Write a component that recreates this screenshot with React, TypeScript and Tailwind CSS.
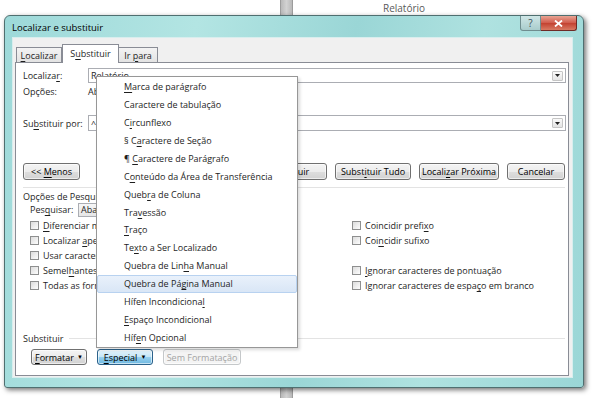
import type { ReactNode } from "react";

const FONT = "font-['Open_Sans',sans-serif]";

function Acc({ t, i = -1 }: { t: string; i?: number }) {
	if (i < 0) return <span className="whitespace-pre">{t}</span>;
	return (
		<span className="whitespace-pre">
			{t.slice(0, i)}
			<span className="underline underline-offset-[1.5px] decoration-[0.5px]">{t[i]}</span>
			{t.slice(i + 1)}
		</span>
	);
}

const MENU_ITEMS: { t: string; i: number }[] = [
	{ t: "Marca de parágrafo", i: 0 },
	{ t: "Caractere de tabulação", i: -1 },
	{ t: "Circunflexo", i: 1 },
	{ t: "§ Caractere de Seção", i: 3 },
	{ t: "¶ Caractere de Parágrafo", i: 2 },
	{ t: "Conteúdo da Área de Transferência", i: 1 },
	{ t: "Quebra de Coluna", i: 4 },
	{ t: "Travessão", i: 3 },
	{ t: "Traço", i: 0 },
	{ t: "Texto a Ser Localizado", i: 2 },
	{ t: "Quebra de Linha Manual", i: 13 },
	{ t: "Quebra de Página Manual", i: 12 },
	{ t: "Hífen Incondicional", i: 18 },
	{ t: "Espaço Incondicional", i: 0 },
	{ t: "Hífen Opcional", i: 3 },
];

const LEFT_CHECKS: { t: string; i: number }[] = [
	{ t: "Diferenciar maiúsculas e minúsculas", i: 0 },
	{ t: "Localizar apenas palavras inteiras", i: 10 },
	{ t: "Usar caracteres curinga", i: -1 },
	{ t: "Semelhantes (Inglês)", i: 5 },
	{ t: "Todas as formas da palavra (Inglês)", i: -1 },
];

const RIGHT_CHECKS: ({ t: string; i: number } | null)[] = [
	{ t: "Coincidir prefixo", i: 15 },
	{ t: "Coincidir sufixo", i: 3 },
	null,
	{ t: "Ignorar caracteres de pontuação", i: 0 },
	{ t: "Ignorar caracteres de espaço em branco", i: 26 },
];

function Arrow() {
	return (
		<div className="ml-auto mr-[2px] flex h-[10px] w-[11px] items-center justify-center rounded-[1px] border border-[#c5c5c5] bg-[linear-gradient(#fafafa,#e4e4e4)]">
			<svg width="5" height="3" viewBox="0 0 5 3">
				<path d="M0 0h5L2.5 3z" fill="#222" />
			</svg>
		</div>
	);
}

function Combo({ value, h = "h-[15px]" }: { value: string; h?: string }) {
	return (
		<div className={`flex ${h} flex-1 items-center border border-[#abadb3] bg-white pl-[2px]`}>
			<span>{value}</span>
			<Arrow />
		</div>
	);
}

function Btn({
	children,
	w,
	variant = "normal",
}: {
	children: ReactNode;
	w: string;
	variant?: "normal" | "pressed" | "disabled";
}) {
	const look =
		variant === "pressed"
			? "border-[#2c628b] bg-[linear-gradient(#e5f4fc,#c4e5f6_50%,#98d1ef_50%,#6fb8e0)] text-black"
			: variant === "disabled"
				? "border-[#c5c8ca] bg-[#f4f4f4] text-[#a4a4a4]"
				: "border-[#707070] bg-[linear-gradient(#f4f4f4,#ececec_50%,#dedede_50%,#d2d2d2)] text-black";
	return (
		<div
			className={`flex h-full ${w} items-center justify-center rounded-[3px] border shadow-[inset_0_0_0_1px_rgba(255,255,255,0.6)] ${look}`}
		>
			{children}
		</div>
	);
}

function Check({ t, i }: { t: string; i: number }) {
	return (
		<div className="flex h-[15px] items-center gap-[4px]">
			<div className="h-[9px] w-[9px] border border-[#8e8f8f] bg-[linear-gradient(135deg,#dcdcdc,#fdfdfd)]" />
			<Acc t={t} i={i} />
		</div>
	);
}

export default function App() {
	return (
		<div className={`relative h-[398px] w-[596px] overflow-hidden bg-white ${FONT} text-[9px] leading-none text-[#1e1e1e]`}>
			{/* document behind the dialog */}
			<div className="absolute left-[280px] top-0 h-full w-[13px] border-x border-[#9c9c9c] bg-[linear-gradient(90deg,#b9b9b9,#d2d2d2,#b9b9b9)]" />
			<div className="absolute left-[383px] top-[3px] text-[10px] text-[#5a5a5a]">Relatório</div>

			{/* dialog window */}
			<div className="relative ml-[4px] mt-[15px] flex h-[373px] w-[580px] flex-col rounded-t-[6px] rounded-b-[3px] border border-[#4f6f70] bg-[linear-gradient(100deg,#9dd9d9,#b3e5e3_30%,#9ad6d6_55%,#afe2e0_75%,#9ad6d6)] shadow-[2px_2px_5px_rgba(0,0,0,0.55)]">
				{/* title bar */}
				<div className="flex h-[21px] items-start">
					<span className="ml-[7px] mt-[7px] text-[9.5px] text-black">Localizar e substituir</span>
					<div className="ml-auto mr-[6px] flex h-[15px]">
						<div className="flex w-[21px] items-center justify-center rounded-bl-[3px] border border-t-0 border-[#6f8d8f] bg-[linear-gradient(#cfe6e6,#a9cccc)] text-[10px] text-[#3b4d57]">
							?
						</div>
						<div className="flex w-[36px] items-center justify-center rounded-br-[3px] border border-l-0 border-t-0 border-[#6e2a26] bg-[linear-gradient(#e8a493,#d0594a_50%,#c2402f_50%,#d87a63)]">
							<svg width="9" height="7" viewBox="0 0 9 7">
								<path d="M1 0.5l7 6M8 0.5l-7 6" stroke="#fff" strokeWidth="1.8" />
							</svg>
						</div>
					</div>
				</div>

				{/* client area */}
				<div className="ml-[7px] flex h-[341px] w-[561px] flex-col border border-[#d8eeee] bg-[#f0f0f0]">
					{/* tabs */}
					<div className="mt-[6px] flex h-[18px] items-end pl-[3px]">
						<div className="flex h-[15px] w-[46px] items-center justify-center border border-b-0 border-[#898c95] bg-[linear-gradient(#f3f3f3,#e3e3e3)]">
							<Acc t="Localizar" i={0} />
						</div>
						<div className="relative z-10 -mb-px flex h-[19px] w-[57px] items-center justify-center border border-b-0 border-[#898c95] bg-white pb-[2px]">
							<Acc t="Substituir" i={1} />
						</div>
						<div className="flex h-[15px] w-[39px] items-center justify-center border border-b-0 border-l-0 border-[#898c95] bg-[linear-gradient(#f3f3f3,#e3e3e3)]">
							<Acc t="Ir para" i={3} />
						</div>
					</div>

					{/* tab panel */}
					<div className="relative ml-[2px] flex h-[314px] w-[554px] flex-col border border-[#898c95] bg-white">
						<div className="mt-[5px] flex items-center pl-[7px] pr-[2px]">
							<span className="w-[65px]">
								<Acc t="Localizar:" i={8} />
							</span>
							<Combo value="Relatório" />
						</div>
						<div className="mt-[1px] flex h-[15px] items-center pl-[7px]">
							<span className="w-[65px]">Opções:</span>
							<span>Abaixo</span>
						</div>
						<div className="mt-[16px] flex items-center pl-[7px] pr-[2px]">
							<span className="w-[65px]">
								<Acc t="Substituir por:" i={2} />
							</span>
							<Combo value="^m" h="h-[16px]" />
						</div>

						{/* action buttons */}
						<div className="mt-[32px] flex h-[17px] pl-[7px] pr-[3px]">
							<Btn w="w-[57px]">
								<Acc t="<< Menos" i={3} />
							</Btn>
							<div className="ml-auto flex h-full gap-[8px]">
								<Btn w="w-[76px]">Substituir</Btn>
								<Btn w="w-[76px]">
									<Acc t="Substituir Tudo" i={5} />
								</Btn>
								<Btn w="w-[80px]">
									<Acc t="Localizar Próxima" i={6} />
								</Btn>
								<Btn w="w-[58px]">Cancelar</Btn>
							</div>
						</div>

						<div className="ml-[7px] mr-[3px] mt-[7px] h-px bg-[#e3e3e3]" />

						<div className="mt-[2px] flex h-[12px] items-center pl-[7px]">Opções de Pesquisa</div>
						<div className="flex h-[15px] items-center pl-[14px]">
							<span className="w-[48px]">
								<Acc t="Pesquisar:" i={3} />
							</span>
							<div className="flex h-[14px] w-[100px] items-center border border-[#abadb3] bg-[linear-gradient(#f6f6f6,#e6e6e6)] pl-[2px]">
								Abaixo
							</div>
						</div>

						{/* search options */}
						<div className="mt-[1px] grid grid-cols-[322px_1fr] pl-[14px]">
							<div className="flex flex-col">
								{LEFT_CHECKS.map((c) => (
									<Check key={c.t} t={c.t} i={c.i} />
								))}
							</div>
							<div className="flex flex-col">
								{RIGHT_CHECKS.map((c, idx) =>
									c ? <Check key={c.t} t={c.t} i={c.i} /> : <div key={idx} className="h-[15px]" />,
								)}
							</div>
						</div>

						{/* replace group */}
						<div className="mt-[39px] flex h-[12px] items-center pl-[7px] pr-[3px]">
							<span>Substituir</span>
							<div className="ml-[6px] h-px flex-1 bg-[#e3e3e3]" />
						</div>
						<div className="mt-[5px] flex h-[16px] gap-[10px] pl-[15px]">
							<Btn w="w-[56px]">
								<Acc t="Formatar" i={0} />
								<span className="ml-[3px] text-[6px]">▼</span>
							</Btn>
							<Btn w="w-[56px]" variant="pressed">
								<Acc t="Especial" i={0} />
								<span className="ml-[3px] text-[6px]">▼</span>
							</Btn>
							<Btn w="w-[78px]" variant="disabled">
								Sem Formatação
							</Btn>
						</div>

						{/* Especial dropdown menu */}
						<div className="absolute left-[80px] top-[13px] z-20 flex h-[272px] w-[202px] flex-col border border-[#979797] bg-white py-[0.5px] shadow-[2px_2px_3px_rgba(0,0,0,0.15)]">
							{MENU_ITEMS.map((m) => {
								const active = m.t === "Quebra de Página Manual";
								return (
									<div
										key={m.t}
										className={`flex h-[18px] items-center pl-[26px] ${
											active
												? "rounded-[2px] border border-[#b8d2f0] bg-[linear-gradient(#e9f1fb,#d9e6f6)]"
												: "border border-transparent"
										}`}
									>
										<Acc t={m.t} i={m.i} />
									</div>
								);
							})}
						</div>
					</div>
				</div>
			</div>
		</div>
	);
}
